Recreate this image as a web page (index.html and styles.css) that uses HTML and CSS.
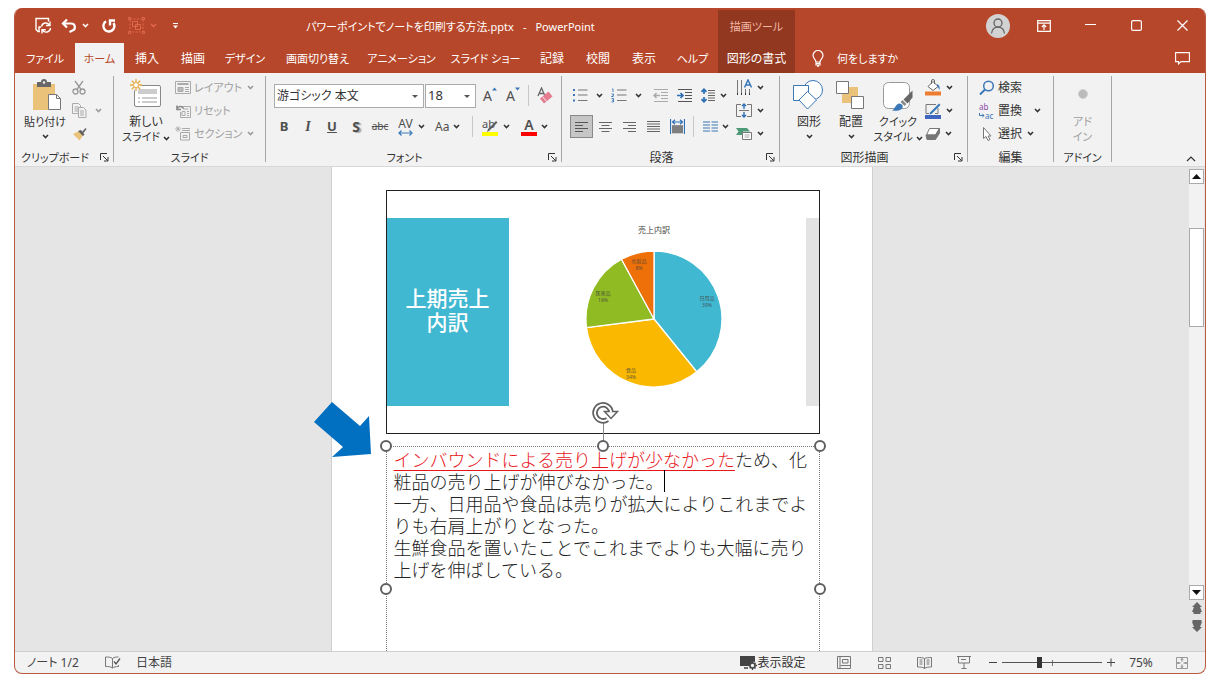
FILE: index.html
```html
<!DOCTYPE html>
<html lang="ja">
<head>
<meta charset="utf-8">
<title>パワーポイントでノートを印刷する方法.pptx - PowerPoint</title>
<link rel="stylesheet" href="styles.css">
</head>
<body>
<svg class="defs" aria-hidden="true">
  <symbol id="chev" viewBox="0 0 7 5"><path d="M1 1l2.500 2.600L6 1" fill="none" stroke="currentColor" stroke-width="1.500"/></symbol>
  <symbol id="launch" viewBox="0 0 9 9"><path d="M.5 7V.5H7M3 3l4.500 4.500M8 4v4H4" fill="none" stroke="currentColor"/></symbol>
</svg>
<div class="window">
  <header>
    <div class="titlebar">
      <div class="qat">
        <button class="q-save" aria-label="上書き保存"><svg width="17" height="17" viewBox="0 0 17 17" fill="none" stroke="currentColor" stroke-width="1.400"><path d="M5 14.500H3L1 12.500V1.500h12.500v3M4 14V10h2"/><path d="M6.500 9.500a4.300 4.300 0 0 1 8-1.300M15.500 11a4.300 4.300 0 0 1-8 2M15 4.500v4h-4M7 16.500v-3.700h3.700"/></svg></button>
        <button class="q-undo" aria-label="元に戻す"><svg width="16" height="16" viewBox="0 0 16 16" fill="none" stroke="currentColor" stroke-width="2.200"><path d="M6 1.500L2 5.500l4 4M2.500 5.500H10a3.700 3.700 0 0 1 1 7.300L8.500 14"/></svg><svg class="chev"><use href="#chev"/></svg></button>
        <button class="q-redo" aria-label="繰り返し"><svg width="16" height="16" viewBox="0 0 16 16" fill="none" stroke="currentColor" stroke-width="2.400"><path d="M5 3.300A5.500 5.500 0 1 0 12.500 5M9 7.500V2.500h5"/></svg></button>
        <button class="q-group" aria-label="グループ化"><svg width="17" height="17" viewBox="0 0 17 17" fill="none" stroke="currentColor"><path d="M2 2h13v13H2z" stroke-dasharray="2 1.500"/><path d="M4.500 4.500h5v5h-5zM7.500 7.500h5v5h-5z"/><path d="M.5.5h2v2h-2zM14.500.5h2v2h-2zM.5 14.500h2v2h-2zM14.500 14.500h2v2h-2z"/></svg><svg class="chev"><use href="#chev"/></svg></button>
        <button class="q-more" aria-label="クイック アクセス ツール バーのユーザー設定"><svg width="5" height="6" viewBox="0 0 5 6"><path d="M0 .5h5" stroke="currentColor"/><path d="M0 2.500h5L2.500 5.500z" fill="currentColor"/></svg></button>
      </div>
      <div class="doc-title"><span>パワーポイントでノートを印刷する方法.pptx</span><span>-</span><span class="app-name">PowerPoint</span></div>
      <div class="context-title">描画ツール</div>
      <div class="controls">
        <button class="avatar" aria-label="アカウント"><svg width="24" height="24" viewBox="0 0 24 24" fill="none" stroke="#646464" stroke-width="1.300"><circle cx="12" cy="12" r="12" fill="#d2d2d2" stroke="none"/><circle cx="12" cy="9" r="4"/><path d="M5.500 19.500c.5-4 3-6.300 6.500-6.300s6 2.300 6.500 6.300"/></svg></button>
        <button class="win-btn" aria-label="リボンの表示オプション"><svg width="14" height="12" viewBox="0 0 14 12" fill="none" stroke="currentColor" stroke-width="1.200"><path d="M.7.7h12.600v10.600H.7zM.7 3.200h12.600M7 10V5M4.800 7L7 4.800 9.200 7"/></svg></button>
        <button class="win-btn" aria-label="最小化"><svg width="11" height="11" viewBox="0 0 11 11"><path d="M0 4.500h11" stroke="currentColor"/></svg></button>
        <button class="win-btn" aria-label="最大化"><svg width="11" height="11" viewBox="0 0 11 11"><rect x=".6" y=".6" width="9.800" height="9.800" rx="1.500" fill="none" stroke="currentColor" stroke-width="1.200"/></svg></button>
        <button class="win-btn" aria-label="閉じる"><svg width="11" height="11" viewBox="0 0 11 11"><path d="M.5.5l10 10M10.500.5l-10 10" stroke="currentColor" stroke-width="1.200"/></svg></button>
      </div>
    </div>
    <nav class="tabs">
      <button class="tab kana t-file">ファイル</button>
      <button class="tab kana t-home active">ホーム</button>
      <button class="tab">挿入</button>
      <button class="tab">描画</button>
      <button class="tab kana t-design">デザイン</button>
      <button class="tab kana t-wide">画面切り替え</button>
      <button class="tab kana t-anim">アニメーション</button>
      <button class="tab kana t-wide">スライド ショー</button>
      <button class="tab">記録</button>
      <button class="tab">校閲</button>
      <button class="tab">表示</button>
      <button class="tab kana t-help">ヘルプ</button>
      <button class="tab t-context">図形の書式</button>
      <button class="tell-me kana"><svg width="12" height="17" viewBox="0 0 12 17" fill="none" stroke="currentColor" stroke-width="1.200"><path d="M4 12c0-2.500-3-3.500-3-6.500a5 5 0 0 1 10 0C11 8.500 8 9.500 8 12zM4 12v3h4v-3M4 13.500h4M5 16.200h2"/></svg>何をしますか</button>
      <button class="win-btn comment" aria-label="コメント"><svg width="15" height="13" viewBox="0 0 15 13" fill="none" stroke="currentColor" stroke-width="1.100"><path d="M.6.600h13.800v9H6L3.500 12V9.600H.6z"/></svg></button>
    </nav>
  </header>

  <div class="ribbon">
    <section class="group g-clip">
      <div class="body kana">
        <button class="big"><svg width="32" height="32" viewBox="0 0 32 32"><path d="M4 5h22v26H4z" fill="#eac27a"/><path d="M8 3h4a3 3 0 0 1 6 0h4v5H8z" fill="#686868"/><circle cx="15" cy="3.500" r="1.200" fill="#f2f2f2"/><path d="M19.500 15.500h8l4 4v11h-12z" fill="#fff" stroke="#777"/><path d="M27.500 15.500v4h4" fill="none" stroke="#777"/></svg><span>貼り付け</span><svg class="chev"><use href="#chev"/></svg></button>
        <div class="stack">
          <button class="row off" aria-label="切り取り"><svg width="14" height="15" viewBox="0 0 14 15" fill="none" stroke="#999" stroke-width="1.300"><path d="M3 1l6.500 9M11 1L4.500 10"/><circle cx="3.500" cy="11.500" r="2.500"/><circle cx="10.500" cy="11.500" r="2.500"/></svg></button>
          <button class="row off gap-l" aria-label="コピー"><svg width="15" height="15" viewBox="0 0 15 15" fill="#f2f2f2" stroke="#aaa"><path d="M.5.5h6l2 2v8h-8zM2.500 4h4M2.500 6h4M2.500 8h4"/><path d="M6.500 4.500h5l2.500 2.500v7.500H6.500zM8 8h4M8 10h4M8 12h4"/></svg><svg class="chev"><use href="#chev"/></svg></button>
          <button class="row" aria-label="書式のコピー/貼り付け"><svg width="15" height="14" viewBox="0 0 15 14"><path d="M1 7l6-3 4 4.500-3.500 5z" fill="#eac27a"/><path d="M6 4l3-1 3.500 4.500L11 9z" fill="#5f5f5f"/><path d="M10 5l3.500-4.000 1 1L11.500 6z" fill="#5f5f5f"/></svg></button>
        </div>
      </div>
      <div class="foot kana"><span>クリップボード</span><button class="launch" aria-label="クリップボードの詳細"><svg width="9" height="9"><use href="#launch"/></svg></button></div>
    </section>

    <section class="group g-slide">
      <div class="body kana">
        <button class="big"><svg width="32" height="32" viewBox="0 0 32 32"><rect x="4.500" y="6.500" width="26" height="21" rx="1.500" fill="#fff" stroke="#888"/><path d="M8 10h19v5H8z" fill="#ccc"/><path d="M8 19h2M12 19h15M8 23h2M12 23h15" stroke="#999"/><circle cx="6" cy="6" r="5.500" fill="#f2f2f2"/><path d="M6 0v12M0 6h12M1.800 1.800l8.400 8.400M10.200 1.800l-8.400 8.400" stroke="#e8ac4a" stroke-width="1.300"/><circle cx="6" cy="6" r="2.500" fill="#fff" stroke="#e8ac4a"/></svg><span class="full">新しい</span><span>スライド <svg class="chev"><use href="#chev"/></svg></span></button>
        <div class="stack">
          <button class="row off"><svg width="16" height="13" viewBox="0 0 16 13" fill="none" stroke="#aaa"><path d="M.5.5h15v12H.5z"/><path d="M2.500 3h11" stroke-width="2"/><path d="M3 6.500h5v4H3z" fill="#bbb"/><path d="M10 6.500h4M10 8.500h4M10 10.500h4"/></svg>レイアウト<svg class="chev"><use href="#chev"/></svg></button>
          <button class="row off"><svg width="16" height="14" viewBox="0 0 16 14" fill="none" stroke="#aaa"><path d="M7.500 2.500h8v11h-10V8M8 5h5.500M7 7.500h3v4H7zM12 7.500h2M12 9.500h2M12 11.500h2"/><path d="M2 1.500v4h4M2 5C3 2 7 1.500 8.500 4.500" stroke="#888" stroke-width="1.600"/></svg>リセット</button>
          <button class="row off"><svg width="16" height="15" viewBox="0 0 16 15" fill="none" stroke="#aaa"><path d="M3 0v6M0 3h6M1 1l4 4M5 1L1 5" stroke-width=".8"/><path d="M7 2.500h8M7 4.500h8M5.500 6.500h9v7.500h-9zM8 9.500h4v2H8z"/></svg>セクション<svg class="chev"><use href="#chev"/></svg></button>
        </div>
      </div>
      <div class="foot kana"><span>スライド</span></div>
    </section>

    <section class="group g-font">
      <div class="body rows">
        <div class="line">
          <span class="combo font-name"><select aria-label="フォント"><option>游ゴシック 本文</option></select></span>
          <span class="combo font-size"><select aria-label="フォント サイズ"><option>18</option></select></span>
          <button class="tool grow" aria-label="フォント サイズの拡大"><span>A</span><svg width="5" height="4" viewBox="0 0 5 4"><path d="M0 3.500L2.500.5 5 3.500z" fill="#3b78b8"/></svg></button>
          <button class="tool grow" aria-label="フォント サイズの縮小"><span>A</span><svg width="5" height="4" viewBox="0 0 5 4"><path d="M0 .5L2.500 3.500 5 .5z" fill="#3b78b8"/></svg></button>
          <i class="vsep"></i>
          <button class="tool" aria-label="すべての書式をクリア"><svg width="16" height="17" viewBox="0 0 16 17"><path d="M1 9L4.500 1 8 9M2.200 6.500h4.500" fill="none" stroke="#666" stroke-width="1.300"/><path d="M3 11.500l8.500-7 4 5-8.500 7z" fill="#e57c90"/><path d="M5.500 9.500l4 5" stroke="#f2f2f2"/></svg></button>
        </div>
        <div class="line">
          <button class="tool bold">B</button>
          <button class="tool italic">I</button>
          <button class="tool under">U</button>
          <button class="tool shadow">S</button>
          <button class="tool strike">abc</button>
          <button class="tool split" aria-label="文字の間隔"><span class="av">AV<svg width="15" height="6" viewBox="0 0 15 6" fill="none" stroke="#3b78b8" stroke-width="1.200"><path d="M1 3h13M3.500.5L1 3l2.500 2.500M11.500.5L14 3l-2.500 2.500"/></svg></span><svg class="chev"><use href="#chev"/></svg></button>
          <button class="tool split">Aa<svg class="chev"><use href="#chev"/></svg></button>
          <i class="vsep"></i>
          <button class="tool split" aria-label="蛍光ペンの色"><span class="hl">ab<svg width="16" height="16" viewBox="0 0 16 16"><path d="M6 9L14 1l1.500 1.500-8 8L5 12z" fill="#5f5f5f"/><path d="M0 12h16v4H0z" fill="#ff0"/></svg></span><svg class="chev"><use href="#chev"/></svg></button>
          <button class="tool split wide" aria-label="フォントの色"><span class="fc">A</span><svg class="chev"><use href="#chev"/></svg></button>
        </div>
      </div>
      <div class="foot kana"><span>フォント</span><button class="launch" aria-label="フォントの詳細"><svg width="9" height="9"><use href="#launch"/></svg></button></div>
    </section>

    <section class="group g-para">
      <div class="body">
        <div class="rows">
          <div class="line">
            <button class="tool list" aria-label="箇条書き"><svg width="16" height="15" viewBox="0 0 16 15"><path d="M1 1h2v2H1zM1 6h2v2H1zM1 11.500h2v2H1z" fill="#3b78b8"/><path d="M6 2h9.500M6 7h9.500M6 12.500h9.500" stroke="#777"/></svg><svg class="chev"><use href="#chev"/></svg></button>
            <button class="tool list" aria-label="段落番号"><svg width="16" height="15" viewBox="0 0 16 15"><path d="M1 1h1v3M.5 6h2v1.500l-2 1h2M.5 10.500h2v3.500h-2M1 12.300h1.500" fill="none" stroke="#3b78b8" stroke-width=".9"/><path d="M6 2h9.500M6 7h9.500M6 12.500h9.500" stroke="#777"/></svg><svg class="chev"><use href="#chev"/></svg></button>
            <button class="tool off" aria-label="インデントを減らす"><svg width="15" height="13" viewBox="0 0 15 13" fill="none" stroke="#aaa"><path d="M1 .5h14M8 3.500h7M8 6.500h7M8 9.500h7M1 12.500h14"/><path d="M7 6.500H1M3.500 4L1 6.500 3.500 9" stroke-width="1.500"/></svg></button>
            <button class="tool" aria-label="インデントを増やす"><svg width="15" height="13" viewBox="0 0 15 13" fill="none" stroke="#555"><path d="M1 .5h14M8 3.500h7M8 6.500h7M8 9.500h7M1 12.500h14"/><path d="M0 6.500h6M3.500 4L6 6.500 3.500 9" stroke="#2f6fb5" stroke-width="1.700"/></svg></button>
            <button class="tool split spacing" aria-label="行間"><svg width="15" height="15" viewBox="0 0 15 15" fill="none"><path d="M3 1v5M3 9v5M.5 3.800L3 1.200l2.500 2.600M.5 11.200L3 13.800l2.500-2.600" stroke="#2f6fb5" stroke-width="1.700"/><path d="M7 2.500h7M7 5h7M7 7.500h7M7 10h7M7 12.500h7" stroke="#666"/></svg><svg class="chev"><use href="#chev"/></svg></button>
          </div>
          <div class="line">
            <button class="tool on" aria-label="左揃え" aria-pressed="true"><svg width="13" height="10" viewBox="0 0 13 10" stroke="#555"><path d="M0 .5h13M0 3.500h8M0 6.500h13M0 9.500h8"/></svg></button>
            <button class="tool" aria-label="中央揃え"><svg width="13" height="10" viewBox="0 0 13 10" stroke="#666"><path d="M0 .5h13M2.500 3.500h8M0 6.500h13M2.500 9.500h8"/></svg></button>
            <button class="tool" aria-label="右揃え"><svg width="13" height="10" viewBox="0 0 13 10" stroke="#666"><path d="M0 .5h13M5 3.500h8M0 6.500h13M5 9.500h8"/></svg></button>
            <button class="tool" aria-label="両端揃え"><svg width="13" height="13" viewBox="0 0 13 13" stroke="#666"><path d="M0 1.500h13M0 4h13M0 6.500h13M0 9h13M0 11.500h13"/></svg></button>
            <button class="tool" aria-label="均等割り付け"><svg width="15" height="15" viewBox="0 0 15 15" fill="none"><path d="M.5 0v15M14.500 0v15M2.500 3h10M5 .8L2.500 3 5 5.200M10 .8L12.500 3 10 5.200" stroke="#2f6fb5" stroke-width="1.200"/><path d="M2 6.500h11v8H2z" fill="#aaa"/><path d="M2 7h11M2 9h11M2 11h11M2 13h11" stroke="#555"/></svg></button>
            <i class="vsep"></i>
            <button class="tool split" aria-label="段組み"><svg width="15" height="12" viewBox="0 0 15 12" stroke="#3b78b8"><path d="M0 1h7M0 4h7M0 7h7M0 10h7M8.500 1h6.500M8.500 4h6.500M8.500 7h6.500M8.500 10h6.500"/></svg><svg class="chev"><use href="#chev"/></svg></button>
          </div>
        </div>
        <div class="stack">
          <button class="row" aria-label="文字列の方向"><svg width="16" height="17" viewBox="0 0 16 17" fill="none"><path d="M1.500 1v13M5.500 1v13M9.500 10v4M13.500 10v4" stroke="#777"/><path d="M1.500 16v-2M5.500 16v-2M9.500 16v-2M13.500 16v-2" stroke="#333"/><path d="M8.500 8.500L12 1l3.500 7.500M9.500 6h5" stroke="#3b78b8" stroke-width="1.500"/></svg><svg class="chev"><use href="#chev"/></svg></button>
          <button class="row" aria-label="文字の配置"><svg width="16" height="15" viewBox="0 0 16 15" fill="none"><path d="M5 1.500H.5v12H5M11 1.500h4.500v12H11M3 7.500h10" stroke="#777"/><path d="M8 6V1M6 3l2-2 2 2M8 9v5M6 12l2 2 2-2" stroke="#2f6fb5" stroke-width="1.400"/></svg><svg class="chev"><use href="#chev"/></svg></button>
          <button class="row" aria-label="SmartArt に変換"><svg width="16" height="13" viewBox="0 0 16 13"><path d="M0 1h11l3 3.500H7V8H0l2.500-3.500z" fill="#4d9a78"/><path d="M6.500 5.500h9v7h-9z" fill="#fff" stroke="#777"/><path d="M8.500 8h5M8.500 10h5" stroke="#aaa"/></svg><svg class="chev"><use href="#chev"/></svg></button>
        </div>
      </div>
      <div class="foot"><span>段落</span><button class="launch" aria-label="段落の詳細"><svg width="9" height="9"><use href="#launch"/></svg></button></div>
    </section>

    <section class="group g-draw">
      <div class="body">
        <button class="big"><svg width="32" height="32" viewBox="0 0 32 32" fill="#fff" stroke="#3b78b8"><circle cx="20" cy="11" r="9.500"/><path d="M.5 6.500h15v15H.5z"/><path d="M14.500 12.500l9 8.500-9 9-8.500-9z"/></svg><span>図形</span><svg class="chev"><use href="#chev"/></svg></button>
        <button class="big"><svg width="32" height="32" viewBox="0 0 32 32" stroke="#777"><path d="M7 8h16v16H7z" fill="#eac27a" stroke="none"/><path d="M1.500 2.500h12v12h-12zM16.500 17.500h12v12h-12z" fill="#fff"/></svg><span>配置</span><svg class="chev"><use href="#chev"/></svg></button>
        <button class="big quick kana"><svg width="32" height="32" viewBox="0 0 32 32"><rect x="1.500" y="3.500" width="26" height="26" rx="5" fill="#fff" stroke="#999"/><path d="M30.500 11.500v7l-5 6-4-4z" fill="#666"/><path d="M20.500 21l4 4-2 2-4-4z" fill="#888"/><path d="M10 31.500c3-1 3-6 7-7 4 0 5 4 2 6-2 1.500-6 1.500-9 1z" fill="#3b78b8"/></svg><span>クイック</span><span>スタイル <svg class="chev"><use href="#chev"/></svg></span></button>
        <div class="stack">
          <button class="row" aria-label="図形の塗りつぶし"><svg width="16" height="17" viewBox="0 0 16 17"><path d="M3 7.500l5-5 5 5-5 4z" fill="#fff" stroke="#666"/><path d="M6.500 5V2a1.500 1.500 0 0 1 3 0v3" fill="none" stroke="#666"/><path d="M12 5c2.500 1 3 3 2.500 6-1-1-1-3-2.500-4z" fill="#3b78b8"/><path d="M0 12.500h16v4H0z" fill="#ed7d31"/></svg><svg class="chev"><use href="#chev"/></svg></button>
          <button class="row" aria-label="図形の枠線"><svg width="16" height="16" viewBox="0 0 16 16"><path d="M11 1.500H1v9h3M13 5v5.500h-3" fill="none" stroke="#777"/><path d="M5 9.500l9-9 1.500 1.500-9 9-2 .5z" fill="#3b78b8"/><path d="M0 12h16v4H0z" fill="#4066bd"/></svg><svg class="chev"><use href="#chev"/></svg></button>
          <button class="row" aria-label="図形の効果"><svg width="15" height="13" viewBox="0 0 15 13" stroke="#777"><path d="M4.500 1.500h10l-4 6.500H1.500z" fill="#fff"/><path d="M1 8h9.500l4-6.500V6l-4 6.500H2z" fill="#777"/></svg><svg class="chev"><use href="#chev"/></svg></button>
        </div>
      </div>
      <div class="foot"><span>図形描画</span><button class="launch" aria-label="図形描画の詳細"><svg width="9" height="9"><use href="#launch"/></svg></button></div>
    </section>

    <section class="group g-edit">
      <div class="body">
        <div class="stack">
          <button class="row"><svg width="16" height="16" viewBox="0 0 16 16" fill="none" stroke="#3b78b8"><circle cx="9.500" cy="6" r="4.800" stroke-width="1.500"/><path d="M6 9.500L1 14.500" stroke-width="2"/></svg>検索</button>
          <button class="row repl"><span class="abac"><b>ab</b><span><svg width="6" height="5" viewBox="0 0 6 5" fill="none" stroke="#3b78b8"><path d="M.5 0v2.500H5M3.300.8L5 2.500 3.300 4.200"/></svg>ac</span></span>置換<svg class="chev"><use href="#chev"/></svg></button>
          <button class="row"><svg width="16" height="16" viewBox="0 0 16 16"><path d="M4.500 1.500v11l2.500-2 2 4 2-1-2-3.500h3z" fill="#fff" stroke="#777"/></svg>選択<svg class="chev"><use href="#chev"/></svg></button>
        </div>
      </div>
      <div class="foot"><span>編集</span></div>
    </section>

    <section class="group g-addin">
      <div class="body kana">
        <button class="big off"><svg width="32" height="32" viewBox="0 0 32 32"><circle cx="16" cy="15" r="4.500" fill="#bbb" stroke="#d0d0d0"/></svg><span>アド</span><span>イン</span></button>
      </div>
      <div class="foot kana"><span>アドイン</span></div>
    </section>
    <button class="collapse" aria-label="リボンを折りたたむ"><svg width="10" height="6" viewBox="0 0 10 6"><path d="M1 5l4-4 4 4" fill="none" stroke="#333" stroke-width="1.200"/></svg></button>
  </div>

  <main class="workspace">
    <div class="canvas">
      <article class="page">
        <div class="slide">
          <h1 class="slide-title">上期売上<br>内訳</h1>
          <figure class="chart">
            <figcaption>売上内訳</figcaption>
            <svg class="pie" width="136" height="136" viewBox="-68 -68 136 136">
              <g stroke="#fff" stroke-width="1.300">
                <path d="M0 0V-68A68 68 0 0 1 42.800 52.800z" fill="#41b8d1"/>
                <path d="M0 0L42.800 52.800A68 68 0 0 1-67.500 8.600z" fill="#fab900"/>
                <path d="M0 0L-67.500 8.600A68 68 0 0 1-32.500-59.700z" fill="#90bb23"/>
                <path d="M0 0L-32.500-59.700A68 68 0 0 1 0-68z" fill="#ee7008"/>
              </g>
              <g class="pie-labels">
                <text x="53" y="-19">日用品</text><text x="53" y="-12">39%</text>
                <text x="-23" y="53">食品</text><text x="-23" y="60">34%</text>
                <text x="-51" y="-24">医薬品</text><text x="-51" y="-17">19%</text>
                <text x="-15" y="-56">化粧品</text><text x="-15" y="-49">8%</text>
              </g>
            </svg>
          </figure>
          <div class="slide-edge"></div>
        </div>
        <div class="notes">
          <p><span class="marked">インバウンドによる売り上げが少なかった</span>ため、化粧品の売り上げが伸びなかった。<span class="caret"></span></p>
          <p>一方、日用品や食品は売りが拡大によりこれまでよりも右肩上がりとなった。</p>
          <p>生鮮食品を置いたことでこれまでよりも大幅に売り上げを伸ばしている。</p>
          <i class="stem"></i>
          <svg class="rotate" width="28" height="24" viewBox="0 0 28 24" fill="none"><path d="M16.500 18.500A8 8 0 1 1 20 11" stroke="#606060" stroke-width="5.500"/><path d="M13.500 10.500h13L20 17.500z" fill="#fff" stroke="#606060" stroke-width="1.500"/><path d="M16.500 18.500A8 8 0 1 1 20 11.500" stroke="#fff" stroke-width="2"/></svg>
          <i class="handle tl"></i><i class="handle tc"></i><i class="handle tr"></i><i class="handle ml"></i><i class="handle mr"></i>
          <svg class="pointer" width="58" height="56" viewBox="0 0 58 56"><path d="M18 1l28 24 9-10 2 38-39 3 11-10L0 21z" fill="#0170c1"/></svg>
        </div>
      </article>
    </div>
    <aside class="scroll">
      <button class="sb-btn" aria-label="上へ"><svg width="9" height="5" viewBox="0 0 9 5"><path d="M0 5L4.500 0 9 5z" fill="#111"/></svg></button>
      <div class="sb-track"><div class="sb-thumb"></div></div>
      <button class="sb-btn" aria-label="下へ"><svg width="9" height="5" viewBox="0 0 9 5"><path d="M0 0l4.500 5L9 0z" fill="#111"/></svg></button>
      <button class="sb-page" aria-label="前のスライド"><svg width="10" height="13" viewBox="0 0 10 13"><path d="M5 0l5 5H8l2 5H8.500v2h-7v-2H0l2-5H0z" fill="#666"/></svg></button>
      <button class="sb-page" aria-label="次のスライド"><svg width="10" height="13" viewBox="0 0 10 13"><path d="M5 13L0 8h2L0 3h.5V1h9v2h.5L8 8h2z" fill="#666"/></svg></button>
    </aside>
  </main>

  <footer class="status">
    <span class="st-page">ノート 1/2</span>
    <button class="st-proof" aria-label="スペル チェック"><svg width="16" height="13" viewBox="0 0 16 13" fill="none" stroke="#777"><path d="M7.500 2.500c-2-1.500-4-1.500-7-1.500v9.500c3 0 5 0 7 1.500V2.500c2-1.500 3.500-1.500 6-1.500M7.500 12c1.500-1 3-1.500 6-1.500V9"/><path d="M9 5.500l2 2.500 4-5.500" stroke="#555" stroke-width="1.300"/></svg></button>
    <button>日本語</button>
    <button class="st-disp"><svg width="17" height="15" viewBox="0 0 17 15"><path d="M0 1h15v6a5 5 0 0 0-6 4H0z" fill="#444"/><path d="M4 13h4" stroke="#444" stroke-width="1.500"/><circle cx="12.500" cy="10.500" r="2.500" fill="none" stroke="#444" stroke-width="1.500"/><path d="M12.500 6.500v1.500M12.500 13v2M8.500 10.500H10M15 10.500h2M9.700 7.700l1 1M14.500 12.500l1 1M15.500 7.700l-1 1M9.700 13.300l1-1" stroke="#444" stroke-width="1.300"/></svg>表示設定</button>
    <button class="st-view" aria-label="標準"><svg width="14" height="13" viewBox="0 0 14 13" fill="none" stroke="#777"><path d="M.5.500h13v12H.5zM3 .5v12M3.500 9.500h10M5.500 3.500h5.500v3.500H5.500z"/></svg></button>
    <button class="st-view" aria-label="スライド一覧"><svg width="13" height="12" viewBox="0 0 13 12" fill="none" stroke="#777"><path d="M.5.500h4.500v4H.5zM8 .5h4.500v4H8zM.5 7.500h4.500v4H.5zM8 7.500h4.500v4H8z"/></svg></button>
    <button class="st-view" aria-label="閲覧表示"><svg width="15" height="12" viewBox="0 0 15 12" fill="none" stroke="#777"><path d="M7.500 1.500C5.500.5 3.500.5.500.5v9.500c3 0 5 0 7 1.500 2-1.500 4-1.500 7-1.500V.5c-3 0-5 0-7 1v10M2.500 3h3M2.500 5h3M2.500 7h3M9.500 3h3M9.500 5h3M9.500 7h3"/></svg></button>
    <button class="st-view" aria-label="スライド ショー"><svg width="14" height="13" viewBox="0 0 14 13" fill="none" stroke="#777"><path d="M0 .500h14M1.500.5v6.500h11V.5M4 3.500h5M7 7v5M4.500 12.500h5"/></svg></button>
    <button class="st-step" aria-label="縮小"><svg width="8" height="9" viewBox="0 0 8 9"><path d="M0 4.500h8" stroke="#444"/></svg></button>
    <span class="slider"><input type="range" min="0" max="100" value="37" aria-label="ズーム"></span>
    <button class="st-step" aria-label="拡大"><svg width="8" height="9" viewBox="0 0 8 9"><path d="M0 4.500h8M4 .5v8" stroke="#444"/></svg></button>
    <button class="st-zoom">75%</button>
    <button class="st-fit" aria-label="ウィンドウに合わせる"><svg width="12" height="12" viewBox="0 0 12 12" fill="none" stroke="#777"><path d="M.5.500h11v11H.5z" stroke="#999"/><path d="M6 1.500v3M6 7.500v3M1.500 6h3M7.500 6h3M5 2.500l1-1 1 1M5 9.500l1 1 1-1M2.500 5l-1 1 1 1M9.500 5l1 1-1 1"/></svg></button>
  </footer>
</div>
</body>
</html>
```

FILE: styles.css
```css
* { box-sizing: border-box; }

body {
  margin: 0;
  padding: 8px 14px;
  height: 100vh;
  background: #fff;
  color: #333;
  font: 12px/15px "Noto Sans", "Noto Sans CJK JP", sans-serif;
  font-feature-settings: "palt";
}

button, select {
  margin: 0;
  padding: 0;
  border: 0;
  background: none;
  color: inherit;
  font: inherit;
  font-feature-settings: inherit;
  white-space: nowrap;
}

svg { flex: none; }
.defs { position: absolute; width: 0; height: 0; }
.chev { width: 7px; height: 5px; }

.window {
  display: flex;
  flex-direction: column;
  height: 100%;
  border: 1px solid #b9593f;
  border-top: 0;
  border-radius: 8px;
  overflow: hidden;
  background: #f2f2f2;
}

/* Title bar and tabs */
header { background: #b7472a; color: #fff; }
.titlebar {
  display: grid;
  grid-template-columns: 291px 412px 77px 1fr;
  height: 35px;
}
.qat { display: flex; align-items: center; padding-left: 15px; }
.qat button { display: flex; align-items: center; justify-content: center; gap: 5px; }
.q-save { width: 26px; }
.q-undo { width: 38px; }
.q-redo, .q-more { width: 30px; }
.q-group { width: 36px; }
.qat .q-group { color: #e0674a; }
.doc-title { display: flex; align-items: baseline; gap: 9px; align-self: center; padding-top: 2px; font-size: 11px; white-space: nowrap; }
.app-name { font-size: 11px; }
.context-title {
  display: flex;
  align-items: center;
  justify-content: center;
  margin-top: 2px;
  background: #933820;
  color: #f0b7a6;
  font-size: 11px;
}
.controls { display: flex; align-items: center; justify-content: flex-end; }
.avatar { width: 24px; height: 24px; margin-right: 11px; }
.win-btn { display: flex; align-items: center; justify-content: center; width: 46px; height: 30px; }

.tabs { display: flex; height: 30px; }
.tab { width: 46px; }
.t-file { width: 60px; }
.t-home { width: 49px; }
.t-design { width: 58px; }
.t-wide { width: 87px; }
.t-anim { width: 81px; }
.t-help { width: 51px; }
.t-context { width: 77px; background: #933820; }
.active { background: #f2f2f2; color: #b7472a; }
.tell-me { display: flex; align-items: center; gap: 13px; padding-left: 17px; }
.comment { margin-left: auto; }

/* Ribbon */
.ribbon {
  display: flex;
  height: 94px;
  padding: 3px 0 4px;
  border-bottom: 1px solid #d8d8d8;
}
.group { display: flex; flex-direction: column; border-right: 1px solid #a6a6a6; }
.g-clip { width: 99px; }
.g-slide { width: 152px; }
.g-font { width: 296px; }
.g-para { width: 218px; }
.g-draw { width: 188px; }
.g-edit { width: 86px; }
.g-addin { width: 58px; }
.body { display: flex; flex: none; height: 74px; }
.foot { display: flex; flex: none; align-items: center; height: 15px; text-align: center; }
.foot span { flex: 1; }
.launch { display: flex; align-items: center; justify-content: center; width: 18px; height: 15px; }
.off { color: #a0a0a0; }

.big { display: flex; flex-direction: column; align-items: center; align-self: flex-start; padding-top: 3px; }
.big > span { height: 15px; margin-top: 3px; }
.big > span + span { margin-top: 0; }
.big > .chev { margin-top: 5px; }
.big .chev { vertical-align: middle; }

.stack { display: flex; flex-direction: column; align-items: flex-start; }
.row { display: flex; align-items: center; gap: 3px; height: 23px; }
.row .chev { margin-left: 2px; }
.gap-l { gap: 6px; }

.g-clip .body { padding-left: 7px; gap: 4px; }
.g-clip .big { width: 46px; }
.g-slide .body { padding-left: 9px; gap: 6px; }
.g-slide .big { width: 46px; }

.rows { display: flex; flex-direction: column; gap: 8px; padding-top: 8px; }
.line { display: flex; align-items: center; height: 23px; }
.tool { display: flex; align-items: center; justify-content: center; width: 24px; height: 23px; color: #505050; }
.split { justify-content: flex-start; gap: 4px; width: 38px; padding-left: 5px; }
.vsep { width: 1px; height: 21px; margin: 0 4px; background: #c8c8c8; }
.chev { color: #333; }
.off .chev { color: #999; }
.q-undo .chev { color: #fff; }
.q-group .chev { color: inherit; }

.g-font .rows { padding-left: 6px; }
.combo { position: relative; height: 24px; margin-right: 1px; border: 1px solid #ababab; background: #fff; }
.combo::after {
  content: "";
  position: absolute;
  top: 10px;
  right: 5px;
  border: 3px solid transparent;
  border-top-color: #555;
  border-bottom: 0;
  pointer-events: none;
}
.combo select { width: 100%; height: 22px; padding-left: 2px; appearance: none; }
.font-name { width: 150px; margin-left: 2px; }
.font-size { width: 51px; margin-right: 2px; font-size: 13px; }
.grow { align-items: center; margin-right: -1px; font-size: 14px; }
.grow svg { align-self: flex-start; margin-top: 3px; }
.bold { font-weight: 700; font-size: 13px; }
.italic { font: italic 700 14px/16px "Liberation Serif", serif; }
.under { font-weight: 700; font-size: 13px; text-decoration: underline; }
.shadow { font-weight: 700; font-size: 14px; text-shadow: 2px 1px 1px #aaa; }
.strike { font-size: 10px; text-decoration: line-through; }
.av { display: flex; flex-direction: column; align-items: center; width: 17px; line-height: 12px; }
.g-font .split { font-size: 12px; }
.hl { position: relative; width: 17px; height: 18px; font-size: 11px; line-height: 11px; text-align: left; }
.hl svg { position: absolute; left: 0; top: 2px; }
.wide { padding-left: 6px; }
.fc { width: 16px; border-bottom: 4px solid #f00; font-size: 14px; font-weight: 600; line-height: 14px; text-align: center; }

.g-para .rows { width: 174px; padding-left: 8px; }
.g-para .row .chev { margin-left: 2px; }
.list { width: 39px; justify-content: flex-start; gap: 8px; padding-left: 2px; }
.spacing { padding-left: 5px; }
.on { width: 23px; border: 1px solid #8a8a8a; background: #c6c6c6; }

.g-draw .big { width: 42px; }
.g-draw .body { padding-left: 8px; }
.g-draw .quick { width: 52px; margin-right: 1px; }
.g-edit .body { padding-left: 11px; }
.repl .chev { margin-left: 9px; }
.abac { display: flex; flex-direction: column; width: 16px; font-size: 8px; line-height: 9px; color: #3b78b8; text-align: left; }
.abac b { font-weight: 400; color: #8a4aa8; }
.abac span { display: flex; align-items: center; }
.g-addin .body { justify-content: center; }
.collapse { align-self: flex-end; margin-left: auto; width: 28px; height: 12px; }

.kana { font-size: 11px; }
.full { font-size: 12px; }

/* Notes page */
.workspace { display: flex; flex: 1; min-height: 0; background: #e5e5e5; }
.canvas { display: flex; flex: 1; justify-content: center; min-width: 0; overflow: hidden; }
.page {
  display: flex;
  flex-direction: column;
  width: 542px;
  padding: 23px 52px 0 54px;
  border: 1px solid #cfcfcf;
  border-width: 0 1px;
  background: #fff;
}
.slide {
  display: grid;
  grid-template-columns: 122px 1fr 13px;
  height: 244px;
  padding: 27px 0;
  border: 1px solid #222;
}
.slide-title {
  display: flex;
  flex-direction: column;
  justify-content: center;
  margin: 0;
  padding-bottom: 6px;
  background: #41b8d1;
  color: #fff;
  font: 500 21px/24px "Noto Sans CJK JP", sans-serif;
  font-feature-settings: normal;
  text-align: center;
}
.slide-title br { display: none; }
.slide-title { display: grid; align-content: center; justify-content: center; grid-template-columns: 86px; }
.slide-edge { background: #e3e3e3; }
.chart { display: flex; flex-direction: column; align-items: center; margin: 0; padding: 5px 6px 0 0; }
.chart figcaption { height: 28px; color: #444; font-size: 8px; line-height: 13px; }
.pie-labels { fill: #404040; font-size: 5px; text-anchor: middle; opacity: .8; }

.notes {
  position: relative;
  flex: 1;
  margin-top: 12px;
  padding: 1px 7px;
  border: 1px dotted #777;
  border-bottom: 0;
  color: #222;
  font: 300 18px/22px "Noto Sans CJK JP", sans-serif;
  font-feature-settings: normal;
}
.notes p { margin: 0; }
.marked { color: #e8161b; text-decoration: underline 1px; text-underline-offset: 3px; }
.caret { display: inline-block; width: 1px; height: 22px; background: #000; vertical-align: top; }
.handle {
  position: absolute;
  width: 12px;
  height: 12px;
  border: 2px solid #606060;
  border-radius: 50%;
  background: #fff;
}
.tl { left: -7px; top: -7px; }
.tc { left: calc(50% - 6px); top: -7px; }
.tr { right: -7px; top: -7px; }
.ml { left: -7px; top: 136px; }
.mr { right: -7px; top: 136px; }
.stem { position: absolute; left: 50%; top: -25px; width: 1px; height: 20px; background: #888; }
.rotate { position: absolute; left: calc(50% - 12px); top: -46px; }
.pointer { position: absolute; left: -73px; top: -46px; }

/* Scroll bar */
.scroll { display: flex; flex-direction: column; align-items: center; width: 17px; padding: 2px 0 17px; }
.sb-btn { display: flex; align-items: center; justify-content: center; width: 15px; height: 15px; border: 1px solid #ababab; background: #fff; }
.sb-track { flex: 1; width: 15px; padding-top: 44px; background: #f2f2f2; }
.sb-thumb { height: 99px; border: 1px solid #ababab; background: #fff; }
.sb-page { display: flex; align-items: center; height: 17px; }

/* Status bar */
.status { display: flex; align-items: center; height: 22px; padding: 0 4px 0 12px; border-top: 1px solid #cfcfcf; color: #444; }
.status button { display: flex; align-items: center; justify-content: center; }
.st-page { width: 78px; }
.st-proof { width: 16px; margin-right: 15px; }
.status .st-disp { width: 66px; margin: 0 18px 0 auto; color: #333; }
.st-view { width: 40px; }
.st-step { width: 18px; }
.st-zoom { width: 42px; }
.st-fit { width: 39px; }
.slider {
  display: flex;
  width: 100px;
  background: linear-gradient(#777, #777) 50% 50% / 1px 6px no-repeat;
}
.slider input { width: 100%; height: 14px; margin: 0; appearance: none; background: linear-gradient(#555, #555) 0 50% / 100% 1px no-repeat; }
.slider input::-webkit-slider-thumb { appearance: none; width: 5px; height: 11px; background: #333; }
```
